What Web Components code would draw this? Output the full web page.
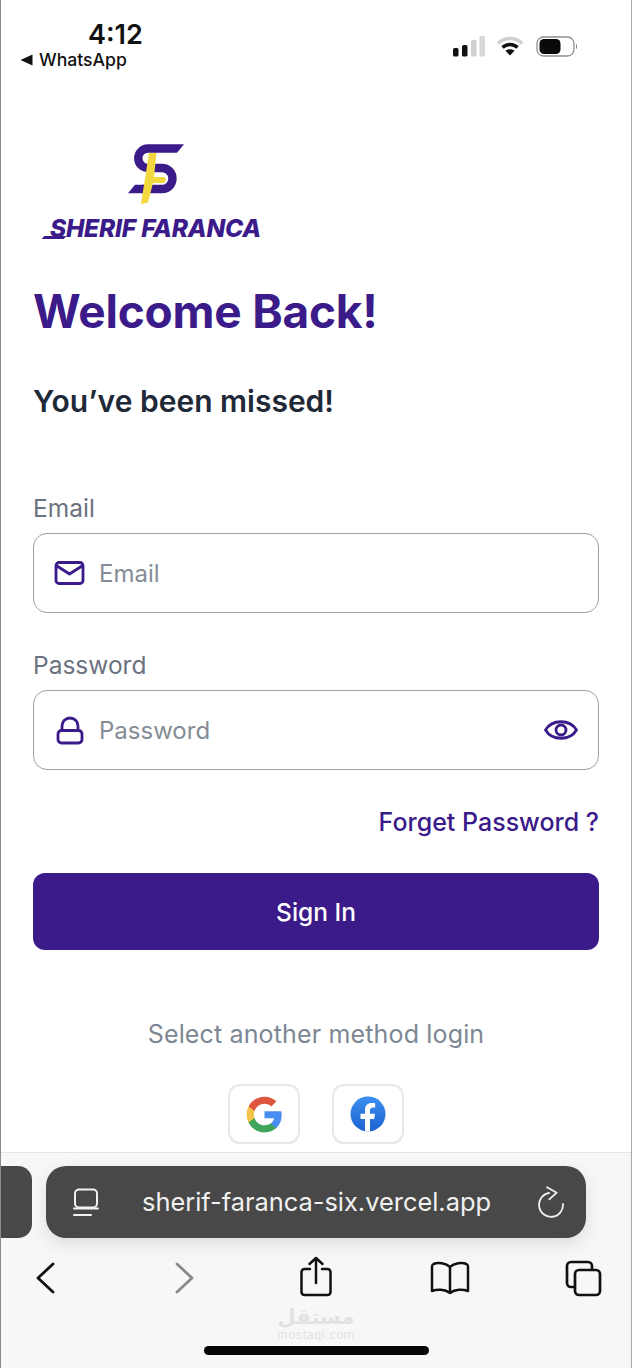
<!DOCTYPE html>
<html lang="en">
<head>
<meta charset="utf-8">
<title>Sherif Faranca - Sign in</title>
<style>
  html, body { margin: 0; padding: 0; background: #fff; }
  body { font-family: Inter, "Liberation Sans", sans-serif; }
</style>
</head>
<body>
<phone-page>
  <status-bar slot="top" time="4:12" back="WhatsApp"></status-bar>
  <login-screen>
    <brand-logo></brand-logo>
    <h-title>Welcome Back!</h-title>
    <h-sub>You’ve been missed!</h-sub>
    <form-field label="Email" placeholder="Email" icon="mail"></form-field>
    <form-field label="Password" placeholder="Password" icon="lock" trailing></form-field>
    <link-row>Forget Password ?</link-row>
    <primary-button>Sign In</primary-button>
    <social-logins>Select another method login</social-logins>
  </login-screen>
  <browser-chrome slot="bottom" url="sherif-faranca-six.vercel.app"></browser-chrome>
</phone-page>

<script>
// marco del telefono: barra arriba, pantalla en medio, navegador abajo
class PhonePage extends HTMLElement {
  constructor() {
    super()
    this.attachShadow({ mode: 'open' })
    this.shadowRoot.innerHTML = `
      <style>
        :host {
          display: flex;
          flex-direction: column;
          box-sizing: border-box;
          width: 632px;
          height: 1368px;
          overflow: hidden;
          background: #fff;
          border-left: 1px solid #8a8a8a;
          border-right: 1px solid #a8a8a8;
        }
        .main { flex: 1; min-height: 0; overflow: hidden; }
      </style>
      <slot name="top"></slot>
      <div class="main"><slot></slot></div>
      <slot name="bottom"></slot>
    `
  }
}

class StatusBar extends HTMLElement {
  constructor() {
    super()
    this.attachShadow({ mode: 'open' })
  }

  connectedCallback() {
    this.shadowRoot.innerHTML = `
      <style>
        :host {
          display: flex;
          justify-content: space-between;
          height: 78px;
          box-sizing: border-box;
          padding: 20px 53px 0 19px;
          color: #111;
        }
        .left { display: flex; flex-direction: column; }
        .time { font-size: 27px; font-weight: 600; line-height: 30px; margin-left: 68px; }
        .back { display: flex; align-items: center; gap: 6px; font-size: 17.600px; font-weight: 500; line-height: 20px; }
        .icons { display: flex; align-items: center; gap: 13px; height: 54px; margin-top: -1px; }
        .icons svg:first-child { margin-right: -1px; }
        svg { display: block; }
      </style>
      <div class="left">
        <div class="time">${this.getAttribute('time')}</div>
        <div class="back">
          <svg width="13" height="12" viewBox="0 0 13 12"><path d="M12.500 .5v11L.5 6z" fill="#111"/></svg>
          <span>${this.getAttribute('back')}</span>
        </div>
      </div>
      <div class="icons">
        <svg width="32" height="22" viewBox="0 0 32 22">
          <rect x="0" y="13" width="5.500" height="8.500" rx="1.600" fill="#111"/>
          <rect x="9" y="10" width="5.500" height="11.500" rx="1.600" fill="#111"/>
          <rect x="18" y="5" width="5.500" height="16.500" rx="1.600" fill="#d0d0d0"/>
          <rect x="26.500" y="1" width="5.500" height="20.500" rx="1.600" fill="#d8d8d8"/>
        </svg>
        <svg width="26" height="20" viewBox="0 0 26 20" fill="none" stroke-linecap="butt">
          <path d="M.8 7.500C7.500 .8 18.500 .8 25.200 7.500" stroke="#cfcfcf" stroke-width="3.400"/>
          <path d="M5.500 11.500C9.500 7.500 16.500 7.500 20.500 11.500" stroke="#111" stroke-width="3.400"/>
          <path d="M13 19.500l-4.500-4.800c2.600-2 6.400-2 9 0z" fill="#111"/>
        </svg>
        <svg width="42" height="22" viewBox="0 0 42 22" fill="none">
          <rect x="1" y="2" width="37" height="19" rx="6.500" stroke="#8f8f8f" stroke-width="1.300"/>
          <rect x="3.500" y="4" width="21" height="15" rx="4.500" fill="#0a0a0a"/>
          <path d="M40 9v5c1.300-.6 1.300-4.400 0-5z" fill="#777"/>
        </svg>
      </div>
    `
  }
}

class BrandLogo extends HTMLElement {
  constructor() {
    super()
    this.attachShadow({ mode: 'open' })
    this.shadowRoot.innerHTML = `
      <style>
        :host { display: block; width: 226px; margin-left: 10px; padding-top: 65px; color: #3b1a8a; }
        svg { display: block; margin-left: 85px; }
        .word {
          position: relative;
          display: block;
          margin-top: 10px;
          padding-left: 7px;
          font-family: Inter, sans-serif;
          font-size: 24.500px;
          font-weight: 800;
          font-style: italic;
          line-height: 26px;
          white-space: nowrap;
          letter-spacing: -0.2px;
        }
        .word::before {
          content: '';
          position: absolute;
          left: 0;
          bottom: 2px;
          width: 22px;
          height: 3px;
          background: #3b1a8a;
          transform: skewX(-40deg);
        }
      </style>
      <svg width="60" height="62" viewBox="0 0 60 62" fill="none">
        <path d="M44 5.500H20A9.750 9.750 0 0 0 20 25H34A10.500 10.500 0 0 1 34 46H14" stroke="#3b1a8a" stroke-width="8.400"/>
        <path d="M44 1.300H56L49 9.700H44z" fill="#3b1a8a"/>
        <path d="M0 50.200L7 41.800H16V50.200z" fill="#3b1a8a"/>
        <path d="M21 10H28.500L26 34H36C39 34 38 40 35 40H25L20 59.500L13 61Z" fill="#f4d840"/>
      </svg>
      <span class="word">SHERIF FARANCA</span>
    `
  }
}

class LoginScreen extends HTMLElement {
  constructor() {
    super()
    this.attachShadow({ mode: 'open' })
    this.shadowRoot.innerHTML = `
      <style>
        :host { display: block; padding: 0 32px 0 32px; }
      </style>
      <slot></slot>
    `
  }
}

class HTitle extends HTMLElement {
  constructor() {
    super()
    this.attachShadow({ mode: 'open' })
    this.shadowRoot.innerHTML = `
      <style>
        :host {
          display: block;
          margin: 44px 0 0 0;
          font-size: 46px;
          font-weight: 700;
          line-height: 52px;
          letter-spacing: -0.2px;
          color: #3b1a8a;
        }
      </style>
      <slot></slot>
    `
  }
}

class HSub extends HTMLElement {
  constructor() {
    super()
    this.attachShadow({ mode: 'open' })
    this.shadowRoot.innerHTML = `
      <style>
        :host {
          display: block;
          margin: 46px 0 0 0;
          font-size: 30px;
          font-weight: 600;
          line-height: 36px;
          color: #1f2937;
        }
      </style>
      <slot></slot>
    `
  }
}

const icons = {
  mail: `<svg width="32" height="26" viewBox="0 0 32 26" fill="none" stroke="#3b1a8a" stroke-width="2.800" stroke-linejoin="round" stroke-linecap="round">
      <rect x="2" y="2.500" width="27" height="21" rx="3"/><path d="M3 6l12.500 8L28 6"/></svg>`,
  lock: `<svg width="32" height="30" viewBox="0 0 32 30" fill="none" stroke="#3b1a8a" stroke-width="2.800" stroke-linejoin="round">
      <rect x="4" y="15.500" width="24" height="12.500" rx="3.500"/><path d="M8 15.500V11a8 8 0 0 1 16 0v4.500"/></svg>`,
  eye: `<svg width="34" height="26" viewBox="0 0 34 26" fill="none" stroke="#3b1a8a" stroke-width="2.800">
      <path d="M1.500 13C8 2 26 2 32.500 13C26 24 8 24 1.500 13Z" stroke-linejoin="round"/><circle cx="17" cy="13" r="5"/></svg>`
}

class FormField extends HTMLElement {
  constructor() {
    super()
    this.attachShadow({ mode: 'open' })
  }

  connectedCallback() {
    const trailing = this.hasAttribute('trailing') ? `<span class="trail">${icons.eye}</span>` : ''

    this.shadowRoot.innerHTML = `
      <style>
        :host { display: block; margin-top: 37px; }
        :host(:first-of-type) { margin-top: 74px; }
        label { display: block; font-size: 24.500px; font-weight: 400; line-height: 30px; color: #6b7280; }
        .box {
          display: flex;
          align-items: center;
          box-sizing: border-box;
          height: 80px;
          margin-top: 10px;
          padding: 0 20px 0 20px;
          border: 1.500px solid #9aa3ab;
          border-radius: 14px;
          background: #fff;
        }
        svg { display: block; }
        .text { margin-left: 13px; padding-top: 2px; font-size: 24px; line-height: 30px; color: #858c96; flex: 1; }
      </style>
      <label>${this.getAttribute('label')}</label>
      <div class="box">
        ${icons[this.getAttribute('icon')]}
        <span class="text">${this.getAttribute('placeholder')}</span>
        ${trailing}
      </div>
    `
  }
}

class LinkRow extends HTMLElement {
  constructor() {
    super()
    this.attachShadow({ mode: 'open' })
    this.shadowRoot.innerHTML = `
      <style>
        :host {
          display: block;
          margin-top: 37px;
          text-align: right;
          font-size: 25px;
          font-weight: 500;
          line-height: 30px;
          color: #3b1a8a;
        }
      </style>
      <slot></slot>
    `
  }
}

class PrimaryButton extends HTMLElement {
  constructor() {
    super()
    this.attachShadow({ mode: 'open' })
    this.shadowRoot.innerHTML = `
      <style>
        :host {
          display: flex;
          align-items: center;
          justify-content: center;
          height: 77px;
          margin-top: 36px;
          border-radius: 12px;
          background: #3b1a8a;
          color: #fff;
          font-size: 24.500px;
          font-weight: 500;
        }
      </style>
      <slot></slot>
    `
  }
}

class SocialLogins extends HTMLElement {
  constructor() {
    super()
    this.attachShadow({ mode: 'open' })
    this.shadowRoot.innerHTML = `
      <style>
        :host { display: block; margin-top: 69px; text-align: center; }
        .title { font-size: 25px; letter-spacing: 0.15px; line-height: 30px; color: #7d8794; }
        .row { display: flex; justify-content: center; gap: 32px; margin-top: 35px; }
        .btn {
          display: flex;
          align-items: center;
          justify-content: center;
          box-sizing: border-box;
          width: 72px;
          height: 60px;
          border: 2px solid #e6e7ea;
          border-radius: 12px;
          background: #fff;
        }
        svg { display: block; }
      </style>
      <div class="title"><slot></slot></div>
      <div class="row">
        <div class="btn">
          <svg width="39" height="39" viewBox="0 0 24 24">
            <path fill="#4a8df0" d="M22.560 12.250c0-.78-.07-1.530-.2-2.250H12v4.260h5.920c-.26 1.370-1.040 2.530-2.210 3.310v2.770h3.570c2.080-1.920 3.280-4.740 3.280-8.090z"/>
            <path fill="#3fa55b" d="M12 23c2.970 0 5.460-.98 7.280-2.660l-3.570-2.770c-.98.66-2.230 1.060-3.710 1.060-2.860 0-5.290-1.930-6.160-4.530H2.180v2.840C3.990 20.530 7.700 23 12 23z"/>
            <path fill="#f3c54a" d="M5.840 14.090c-.22-.66-.35-1.360-.35-2.090s.13-1.430.35-2.090V7.070H2.180C1.430 8.550 1 10.220 1 12s.43 3.450 1.180 4.930l2.850-2.220.81-.62z"/>
            <path fill="#e0553f" d="M12 5.380c1.620 0 3.060.56 4.210 1.640l3.150-3.150C17.450 2.090 14.970 1 12 1 7.700 1 3.990 3.470 2.180 7.070l3.660 2.840c.87-2.600 3.300-4.530 6.160-4.530z"/>
          </svg>
        </div>
        <div class="btn">
          <svg width="36" height="36" viewBox="0 0 36 36">
            <defs><linearGradient id="fb" x1="0" y1="0" x2="0" y2="1"><stop offset="0" stop-color="#3b8ff0"/><stop offset="1" stop-color="#1e62d0"/></linearGradient></defs>
            <circle cx="18" cy="18" r="17.500" fill="url(#fb)"/>
            <path fill="#fff" d="M15 35.500V23h-4.500v-5.200H15v-3.900c0-4.500 2.700-7 6.800-7 1.300 0 2.500.2 3.400.3v4.400h-2.300c-2.200 0-2.900 1.400-2.900 2.800v3.400h5l-.8 5.200h-4.200v12.500z"/>
          </svg>
        </div>
      </div>
    `
  }
}

class BrowserChrome extends HTMLElement {
  constructor() {
    super()
    this.attachShadow({ mode: 'open' })
  }

  connectedCallback() {
    this.shadowRoot.innerHTML = `
      <style>
        :host {
          display: block;
          position: relative;
          box-sizing: border-box;
          height: 216px;
          padding-top: 13px;
          background: #f7f7f7;
          border-top: 1px solid #e4e4e4;
        }
        svg { display: block; }
        .tabs { display: flex; gap: 14px; }
        .stub { width: 31px; height: 72px; border-radius: 0 14px 14px 0; background: #484848; }
        .url {
          display: flex;
          align-items: center;
          box-sizing: border-box;
          width: 540px;
          height: 72px;
          padding: 0 20px 0 27px;
          border-radius: 20px;
          background: #484848;
          box-shadow: 0 6px 18px rgba(0, 0, 0, .1);
          color: #f1f1f1;
        }
        .url span { flex: 1; margin-left: 43px; font-size: 25.400px; line-height: 30px; white-space: nowrap; }
        .tools {
          display: grid;
          grid-template-columns: 138px 132px 132px 134px 38px;
          margin-top: 18px;
          padding-left: 27px;
        }
        .mark {
          position: absolute;
          left: 0;
          right: 0;
          top: 152px;
          text-align: center;
          color: #e2e2e2;
        }
        .mark b { display: block; font-family: "DejaVu Sans", sans-serif; font-size: 21px; font-weight: 700; line-height: 24px; }
        .mark i { display: block; font-family: "Liberation Sans", sans-serif; font-style: normal; font-size: 12.500px; letter-spacing: 0.6px; line-height: 13px; }
        .home {
          position: absolute;
          left: 203px;
          top: 193px;
          width: 225px;
          height: 9px;
          border-radius: 5px;
          background: #050505;
        }
      </style>
      <div class="tabs">
        <div class="stub"></div>
        <div class="url">
          <svg width="26" height="30" viewBox="0 0 26 30" fill="none" stroke="#f1f1f1" stroke-width="2" stroke-linecap="round">
            <rect x="2" y="2.500" width="22" height="18" rx="4"/>
            <path d="M1 21.500h24"/><path d="M1 28h17"/>
          </svg>
          <span>${this.getAttribute('url')}</span>
          <svg width="28" height="32" viewBox="0 0 28 32" fill="none" stroke="#f1f1f1" stroke-width="1.800" stroke-linecap="round" stroke-linejoin="round">
            <path d="M11 7A12 12 0 1 0 25 18"/><path d="M9 1.300L18.700 6.700L11.300 13.300"/>
          </svg>
        </div>
      </div>
      <div class="tools">
        <svg width="36" height="44" viewBox="0 0 36 44" fill="none" stroke="#111" stroke-width="2.800" stroke-linecap="round" stroke-linejoin="round"><path d="M25 8L10 22l15 14"/></svg>
        <svg width="36" height="44" viewBox="0 0 36 44" fill="none" stroke="#8a8a8a" stroke-width="2.800" stroke-linecap="round" stroke-linejoin="round"><path d="M11 8l15 14L11 36"/></svg>
        <svg width="36" height="44" viewBox="0 0 36 44" fill="none" stroke="#111" stroke-width="2.500" stroke-linecap="round" stroke-linejoin="round"><path d="M12 13H6.500a3 3 0 0 0-3 3v20a3 3 0 0 0 3 3h23a3 3 0 0 0 3-3V16a3 3 0 0 0-3-3H24"/><path d="M18 27V2M11.500 8L18 2l6.500 6"/></svg>
        <svg width="40" height="44" viewBox="0 0 40 44" fill="none" stroke="#111" stroke-width="2.500" stroke-linecap="round" stroke-linejoin="round"><path d="M20 11C16 7 8 6 3.500 8C2.500 8.500 2 9.500 2 10.500V35C7 33 15 33 20 37C25 33 33 33 38 35V10.500C38 9.500 37.500 8.500 36.500 8C32 6 24 7 20 11ZM20 11V37"/></svg>
        <svg width="38" height="44" viewBox="0 0 38 44" fill="none" stroke="#111" stroke-width="2.700" stroke-linejoin="round"><rect x="11" y="14" width="25" height="25" rx="4"/><path d="M10 31H7a4 4 0 0 1-4-4V10a4 4 0 0 1 4-4h17a4 4 0 0 1 4 4v3"/></svg>
      </div>
      <div class="mark"><b lang="ar" dir="rtl">مستقل</b><i>mostaql.com</i></div>
      <div class="home"></div>
    `
  }
}

window.customElements.define('phone-page', PhonePage)
window.customElements.define('status-bar', StatusBar)
window.customElements.define('brand-logo', BrandLogo)
window.customElements.define('login-screen', LoginScreen)
window.customElements.define('h-title', HTitle)
window.customElements.define('h-sub', HSub)
window.customElements.define('form-field', FormField)
window.customElements.define('link-row', LinkRow)
window.customElements.define('primary-button', PrimaryButton)
window.customElements.define('social-logins', SocialLogins)
window.customElements.define('browser-chrome', BrowserChrome)
</script>
</body>
</html>
